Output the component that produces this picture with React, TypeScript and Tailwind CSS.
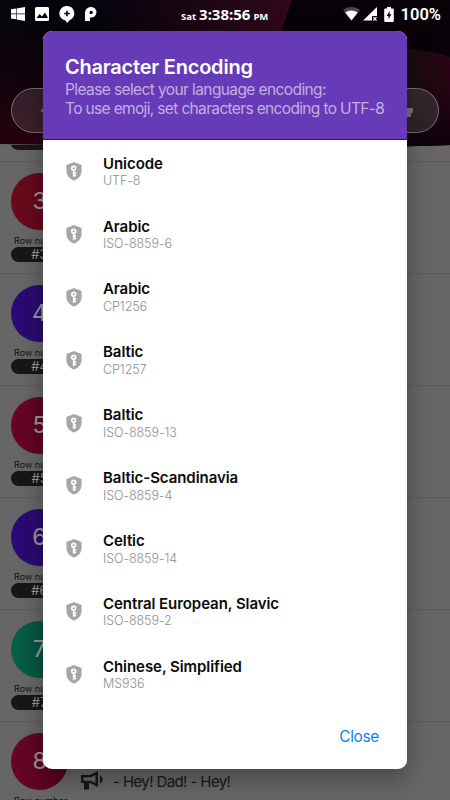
import React from 'react'

const encodings = [
  { name: 'Unicode', code: 'UTF-8' },
  { name: 'Arabic', code: 'ISO-8859-6' },
  { name: 'Arabic', code: 'CP1256' },
  { name: 'Baltic', code: 'CP1257' },
  { name: 'Baltic', code: 'ISO-8859-13' },
  { name: 'Baltic-Scandinavia', code: 'ISO-8859-4' },
  { name: 'Celtic', code: 'ISO-8859-14' },
  { name: 'Central European, Slavic', code: 'ISO-8859-2' },
  { name: 'Chinese, Simplified', code: 'MS936' },
]

const rows = [
  { id: 3, color: 'bg-linear-to-r from-[#6a0a1a] to-[#5c0820]' },
  { id: 4, color: 'bg-linear-to-r from-[#2d0a78] to-[#260a62]' },
  { id: 5, color: 'bg-linear-to-r from-[#690525] to-[#55041d]' },
  { id: 6, color: 'bg-linear-to-r from-[#2d0a78] to-[#260a62]' },
  { id: 7, color: 'bg-linear-to-r from-[#076048] to-[#054b38]' },
  { id: 8, color: 'bg-linear-to-r from-[#690525] to-[#55041d]' },
]

function ShieldKey() {
  return (
    <svg viewBox="0 0 16 19" className="h-[19px] w-4 shrink-0">
      <path d="M8 0 15.6 3.1v5.6c0 4.6-3.2 8.5-7.6 9.800C3.600 17.200.4 13.300.4 8.700V3.100z" fill="#a6a6a6" />
      <circle cx="7.700" cy="6.200" r="1.900" fill="none" stroke="#fff" strokeWidth="1.700" />
      <path d="M7.700 8v6.800M7.700 10.800h2.400M7.700 13.400h2.400" stroke="#fff" strokeWidth="1.700" fill="none" />
    </svg>
  )
}

function Megaphone() {
  return (
    <svg viewBox="0 0 23 19" className="h-[19px] w-[23px]" fill="#171717">
      <path fillRule="evenodd" d="M0 4h9l8-4v16l-8-4H8v6.500H3V12H0zM2.500 6.300v3.400h7.300l4.700 2.400V3.900L9.800 6.300z" />
      <path d="M19 4.500c3.500 1.500 3.500 6.500 0 8z" />
    </svg>
  )
}

function StatusBar() {
  return (
    <div className="relative flex h-[28px] items-center text-white">
      <div className="flex items-center pl-[11px]">
        <svg viewBox="0 0 14 14" className="h-[14px] w-[14px]" fill="#fff">
          <path d="M0 2.200 5 1.500v5H0zM5.600 1.400 14 0v6.500H5.600zM0 7.200h5v5l-5-.7zM5.600 7.200H14V14l-8.400-1.500z" />
        </svg>
        <svg viewBox="0 0 14 14" className="ml-[10px] h-[14px] w-[14px]">
          <rect width="14" height="14" rx="1.500" fill="#fff" />
          <path d="M1.500 11 4.700 7l2.300 2.600 3-4 3 5.400z" fill="#0b0308" />
        </svg>
        <svg viewBox="0 0 16 17" className="ml-[10px] h-[17px] w-4">
          <path d="M8 0a7.300 7.300 0 0 1 3 13.900L8 17l-1.500-2.500A7.300 7.300 0 0 1 8 0z" fill="#fff" />
          <path d="M8 4.700v5.600M5.200 7.500h5.600" stroke="#0b0308" strokeWidth="1.600" />
        </svg>
        <svg viewBox="0 0 12 14" className="ml-[10px] h-[14px] w-3">
          <path fillRule="evenodd" d="M6.300 0a5.200 5.200 0 1 1 0 10.400H5V14H0V6.200C0 2.500 2.600 0 6.300 0zM6.200 3.800a1.600 1.600 0 0 0-1.600 1.600v1.600h1.600a1.600 1.600 0 0 0 0-3.200z" fill="#fff" />
        </svg>
      </div>
      <div className="absolute left-[181px] top-[3px] flex items-baseline whitespace-nowrap font-['Noto_Sans',sans-serif] font-bold leading-[22px]">
        <span className="text-[9.500px]">Sat</span>
        <span className="ml-[3px] text-[15px]">3:38:56</span>
        <span className="ml-[3px] text-[9.500px]">PM</span>
      </div>
      <div className="ml-auto flex items-center pr-[9px]">
        <svg viewBox="0 0 17 14" className="h-[14px] w-[17px]">
          <path d="M0 3c5-4 12-4 17 0L8.500 13.500z" fill="#4b464a" />
          <path d="M2.200 5.500c4-2.800 8.600-2.800 12.600 0L8.500 13.500z" fill="#fff" />
        </svg>
        <svg viewBox="0 0 14 14" className="ml-[3px] h-[14px] w-[14px]">
          <path d="M14 0v9H9v4.500H0z" fill="#fff" />
          <path d="m10.300 10.200 3.200 3.300m0-3.300-3.200 3.300" stroke="#fff" strokeWidth="1.200" />
        </svg>
        <svg viewBox="0 0 10 15" className="ml-[7px] h-[15px] w-[10px]">
          <path d="M3 0h4v1.500h1.500c.7 0 1.300.5 1.300 1.200v11c0 .7-.6 1.300-1.300 1.300h-7C.8 15 .2 14.400.2 13.700v-11c0-.7.6-1.200 1.300-1.200H3z" fill="#fff" />
          <path d="M5.700 4 2.500 9h2v3.300l3-5h-2z" fill="#0b0308" />
        </svg>
        <span className="ml-[7px] pt-[1px] font-['Roboto',sans-serif] text-[16.500px] font-semibold leading-[22px]">100%</span>
      </div>
    </div>
  )
}

function Dialog() {
  return (
    <div className="absolute left-[43px] top-[31px] flex h-[738px] w-[364px] flex-col overflow-hidden rounded-[9px] bg-white font-['Inter',sans-serif]">
      <div className="h-[109px] shrink-0 whitespace-nowrap border-b border-[#35089b] bg-[#673ab7] pl-[22px] pt-[24px]">
        <h2 className="text-[20px] font-semibold leading-[25px] tracking-[-0.22px] text-white">Character Encoding</h2>
        <p className="text-[15.500px] leading-[19px] tracking-[-0.6px] text-[#c2b0e2]">Please select your language encoding:</p>
        <p className="text-[15.500px] leading-[19px] tracking-[-0.65px] text-[#c2b0e2]">To use emoji, set characters encoding to UTF-8</p>
      </div>
      <ul className="shrink-0">
        {encodings.map((e, i) => (
          <li key={i} className="flex h-[62.900px] items-center gap-[21px] pl-[23px]">
            <ShieldKey />
            <div className="whitespace-nowrap">
              <div className="text-[15px] font-semibold leading-[19px] tracking-[-0.06px] text-[#0a0a0a]">{e.name}</div>
              <div className="pt-[0.6px] text-[12.500px] font-light leading-[16px] tracking-[-0.08px] text-[#8f8f8f]">{e.code}</div>
            </div>
          </li>
        ))}
      </ul>
      <div className="flex flex-1 justify-end pr-[28px] pt-[19.600px]">
        <button className="h-[22px] text-[15.500px] leading-[22px] tracking-[-0.35px] text-[#0a84e8]">Close</button>
      </div>
    </div>
  )
}

export default function App() {
  return (
    <div className="relative flex h-[800px] w-[450px] flex-col overflow-hidden bg-[#666] font-['Inter',sans-serif]">
      <div className="relative h-[162px] shrink-0 border-b border-[#5b5b5b]">
        <svg viewBox="0 0 450 162" className="absolute left-0 top-0 h-[162px] w-[450px]">
          <defs>
            <linearGradient id="top" x1="0" y1="0" x2="0" y2="1">
              <stop offset="0" stopColor="#05040c" />
              <stop offset=".4" stopColor="#0c040b" />
              <stop offset="1" stopColor="#29000f" />
            </linearGradient>
            <linearGradient id="beam" x1="0" y1="0" x2="1" y2="0">
              <stop offset="0" stopColor="#30081a" stopOpacity="0" />
              <stop offset="1" stopColor="#30081a" />
            </linearGradient>
            <linearGradient id="right" x1="0" y1="0" x2="1" y2="0">
              <stop offset="0" stopColor="#151014" />
              <stop offset=".4" stopColor="#1c0a12" />
              <stop offset="1" stopColor="#2a0414" />
            </linearGradient>
            <linearGradient id="fade" x1="0" y1="0" x2="0" y2="1">
              <stop offset=".3" stopColor="#090108" stopOpacity="0" />
              <stop offset="1" stopColor="#090108" stopOpacity=".8" />
            </linearGradient>
          </defs>
          <path d="M0 0h450v145l-150 4L0 144z" fill="url(#top)" />
          <path d="M100 0h192l-10 31H100z" fill="url(#beam)" />
          <path d="M292 0h158v145l-50 1.500-118-116z" fill="#090108" />
          <path d="M400 49c20 0 36 3 50 8v88l-50 1.500z" fill="url(#right)" />
          <path d="M400 49c20 0 36 3 50 8v88l-50 1.500z" fill="url(#fade)" />
          <path d="M11 145h49v5H20c-5 0-8-2-9-5z" fill="#171717" />
        </svg>
        <div className="relative">
          <StatusBar />
          <div className="mx-[11px] mt-[60px] flex h-[45px] items-center justify-between rounded-full border border-[#77727a] bg-white/12 px-[25px]">
            <div className="ml-[4px] h-[3px] w-5 bg-[#6b6268]" />
            <svg viewBox="0 0 10 10" className="mt-[5px] h-[10px] w-[10px]" fill="#77747a">
              <path d="M0 0h10v5H8v4H0z" />
            </svg>
          </div>
        </div>
      </div>
      {rows.map(row => (
        <div key={row.id} className="flex h-[112px] shrink-0 border-b border-[#5b5b5b] pl-[11px] pt-[11px]">
          <div className="w-[60px]">
            <div className={`flex h-[57px] w-[57px] items-center justify-center rounded-full text-[23px] text-[#999] ${row.color}`}>
              {row.id}
            </div>
            <div className="pl-[3px] pt-[5px] text-[9px] leading-[12px] whitespace-nowrap text-[#111]">Row number</div>
            <div className="flex h-[15px] w-[57px] items-center justify-center rounded-full bg-[#171717] text-[13px] text-[#999]">
              #{row.id}
            </div>
          </div>
          {row.id === 8 && (
            <div className="flex gap-[9px] pl-[10px] pt-[38px]">
              <Megaphone />
              <span className="pt-[1px] text-[15px] leading-[20px] tracking-[-0.6px] whitespace-nowrap text-[#171717]">- Hey! Dad! - Hey!</span>
            </div>
          )}
        </div>
      ))}
      <div className="absolute left-[43px] top-[31px] h-[738px] w-[364px] rounded-[9px] shadow-[0_10px_24px_rgba(0,0,0,0.32)]" />
      <Dialog />
    </div>
  )
}
